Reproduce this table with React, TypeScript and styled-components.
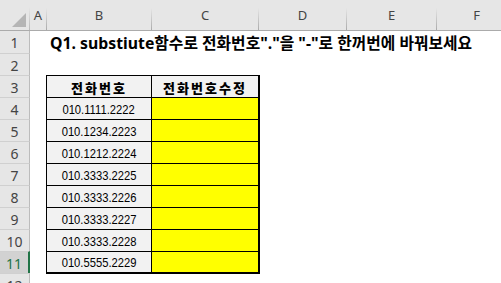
import React from "react";
import styled, { createGlobalStyle } from "styled-components";

const GlobalStyle = createGlobalStyle`
  html, body { margin: 0; padding: 0; background: #ffffff; }
  body { font-family: "Liberation Sans", "Noto Sans CJK KR", sans-serif; }
  * { box-sizing: border-box; }
`;

const Sheet = styled.div`
  width: 501px;
  height: 283px;
  overflow: hidden;
  background: #ffffff;
  display: flex;
  flex-direction: column;
`;

const HeaderBar = styled.div`
  display: flex;
  height: 31px;
  flex: none;
  background: #e6e6e6;
  border-bottom: 1px solid #ababab;
`;

const Corner = styled.div`
  width: 30px;
  flex: none;
  position: relative;
  border-right: 1px solid #c0c0c0;
  border-image: linear-gradient(to bottom, #e6e6e6 25%, #b8b8b8) 1;
`;

const CornerTriangle = styled.svg`
  position: absolute;
  right: 3px;
  bottom: 3px;
`;

const ColHead = styled.div<{ $w: number; $first?: boolean }>`
  width: ${(p) => p.$w}px;
  flex: none;
  display: flex;
  align-items: flex-end;
  justify-content: center;
  padding-bottom: 6px;
  font-family: "Noto Sans", "Liberation Sans", sans-serif;
  font-size: 13px;
  color: #444444;
  border-left: ${(p) => (p.$first ? "0" : "1px solid #ababab")};
  border-image: ${(p) =>
    p.$first ? "none" : "linear-gradient(to bottom, #e6e6e6 28%, #a8a8a8) 1"};
`;

const Row = styled.div`
  display: flex;
  height: 22px;
  flex: none;
`;

const RowHead = styled.div<{ $active?: boolean; $first?: boolean }>`
  width: 30px;
  flex: none;
  display: flex;
  align-items: center;
  justify-content: center;
  font-family: "Noto Sans", "Liberation Sans", sans-serif;
  font-size: 14px;
  padding-top: 1px;
  color: ${(p) => (p.$active ? "#217346" : "#444444")};
  background: ${(p) => (p.$active ? "#d2d2d2" : "#e6e6e6")};
  border-top: ${(p) => (p.$first ? "0" : "1px solid #d0d0d0")};
  border-right: ${(p) => (p.$active ? "2px solid #217346" : "1px solid #bcbcbc")};
`;

const Gap = styled.div<{ $w: number }>`
  width: ${(p) => p.$w}px;
  flex: none;
`;

const Title = styled.div`
  flex: none;
  padding-left: 4px;
  display: flex;
  align-items: center;
  white-space: nowrap;
  font-family: "Noto Sans", "Noto Sans CJK KR", sans-serif;
  font-weight: bold;
  font-size: 15.8px;
  color: #000000;
`;

const Cell = styled.div<{ $w: number; $fill: string; $last?: boolean; $edge?: boolean }>`
  width: ${(p) => p.$w}px;
  flex: none;
  display: flex;
  align-items: center;
  justify-content: center;
  white-space: nowrap;
  background: ${(p) => p.$fill};
  border-left: 1px solid #000000;
  border-top: 1px solid #000000;
  border-right: ${(p) => (p.$edge ? "2px solid #000000" : "0")};
  border-bottom: ${(p) => (p.$last ? "1px solid #000000" : "0")};
  box-shadow: ${(p) => (p.$last ? "0 1px 0 #000000" : "none")};
  font-family: "Noto Sans CJK KR", sans-serif;
  font-weight: 900;
  font-size: 13px;
  letter-spacing: 2px;
  padding-top: 1px;
  color: #000000;
`;

/* Phone numbers use a narrow, tall digit face */
const Phone = styled.span`
  display: inline-block;
  font-family: "Liberation Sans", sans-serif;
  font-weight: 400;
  font-size: 13.5px;
  letter-spacing: 0;
  transform: scaleX(0.83);
`;

const columns = [
  { name: "A", w: 16 },
  { name: "B", w: 105 },
  { name: "C", w: 107 },
  { name: "D", w: 88 },
  { name: "E", w: 90 },
  { name: "F", w: 80 },
];

const phones = [
  "010.1111.2222",
  "010.1234.2223",
  "010.1212.2224",
  "010.3333.2225",
  "010.3333.2226",
  "010.3333.2227",
  "010.3333.2228",
  "010.5555.2229",
];

export default function App() {
  return (
    <>
      <GlobalStyle />
      <Sheet>
        <HeaderBar>
          <Corner>
            <CornerTriangle width="14" height="14" viewBox="0 0 14 14">
              <polygon points="14,0 14,14 0,14" fill="#b5b5b5" />
            </CornerTriangle>
          </Corner>
          {columns.map((c, i) => (
            <ColHead key={c.name} $w={c.w} $first={i === 0}>
              {c.name}
            </ColHead>
          ))}
        </HeaderBar>

        <Row>
          <RowHead $first>1</RowHead>
          <Gap $w={16} />
          <Title>Q1. substiute함수로 전화번호"."을 "-"로 한꺼번에 바꿔보세요</Title>
        </Row>
        <Row>
          <RowHead>2</RowHead>
        </Row>
        <Row>
          <RowHead>3</RowHead>
          <Gap $w={16} />
          <Cell $w={105} $fill="#f2f2f2">
            전화번호
          </Cell>
          <Cell $w={109} $fill="#f2f2f2" $edge>
            전화번호수정
          </Cell>
        </Row>
        {phones.map((p, i) => {
          const last = i === phones.length - 1;
          return (
            <Row key={p}>
              <RowHead $active={last}>{i + 4}</RowHead>
              <Gap $w={16} />
              <Cell $w={105} $fill="#f2f2f2" $last={last}>
                <Phone>{p}</Phone>
              </Cell>
              <Cell $w={109} $fill="#ffff00" $last={last} $edge />
            </Row>
          );
        })}
        <Row>
          <RowHead>12</RowHead>
        </Row>
      </Sheet>
    </>
  );
}
